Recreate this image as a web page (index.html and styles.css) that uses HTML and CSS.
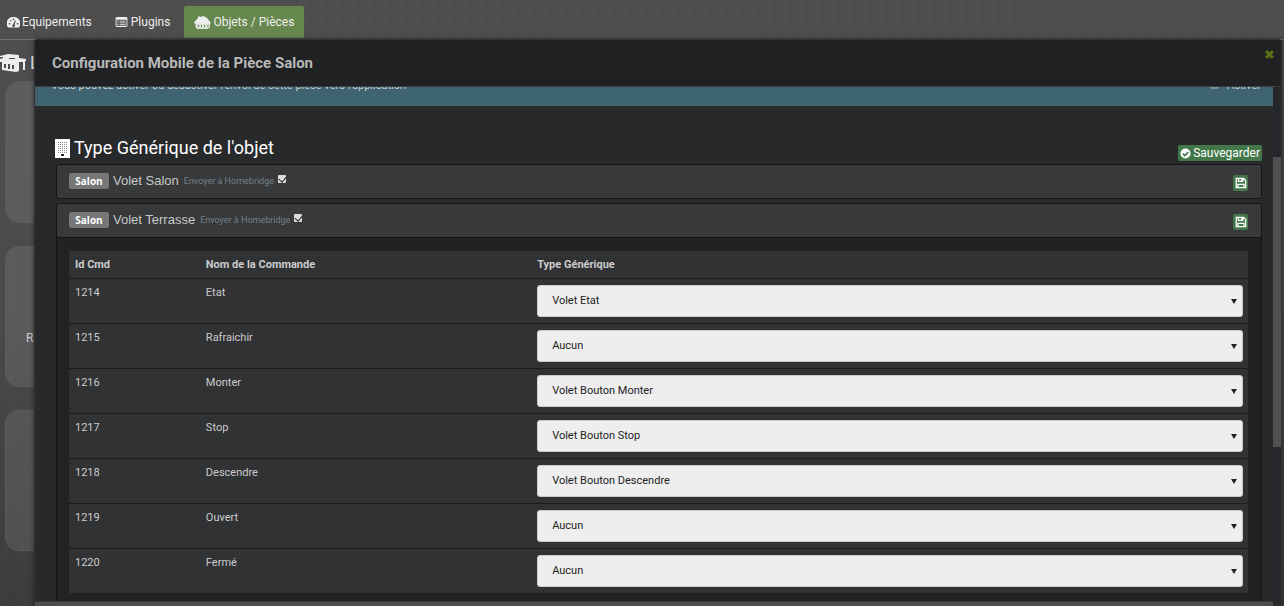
FILE: index.html
```html
<!DOCTYPE html>
<html lang="fr">
<head>
<meta charset="utf-8">
<title>Objets / Pièces</title>
<link rel="stylesheet" href="styles.css">
</head>
<body>
<svg width="0" height="0" class="sprite" aria-hidden="true">
  <symbol id="floppy" viewBox="0 0 14 14"><path fill="none" stroke="currentColor" stroke-width="1.5" d="M1.5 1.5h8.5l2.5 2.5v8.500H1.500zM4 1.500v3.500h5V1.500M3.500 12.500V8.500h7v4"/><path fill="currentColor" d="M7 2h1.500v2.500H7z"/></symbol>
</svg>
<nav class="nav">
  <a class="nav-link" href="#"><svg class="icon-gauge" viewBox="0 0 14 12"><path fill="currentColor" fill-rule="evenodd" d="M7 0a7 7 0 0 0-5.900 11.500h11.800A7 7 0 0 0 7 0zM1.800 6.500h1.600v1.600H1.800zM3.300 3.200h1.500v1.500H3.300zM6.200 1.600h1.600v1.600H6.200zM10.600 6.500h1.600v1.600h-1.600zM8.600 3.600l1 .4-1.500 4.200a1.500 1.500 0 1 1-1.300-.3z"/></svg>Equipements</a>
  <a class="nav-link" href="#"><svg class="icon-list" viewBox="0 0 13 11"><path fill="currentColor" fill-rule="evenodd" d="M1 0h11l1 1v9l-1 1H1l-1-1V1zM1 3v7h11V3zM2 4h1.500v1H2zM4.500 4H11v1H4.500zM2 6h1.500v1H2zM4.500 6H11v1H4.500zM2 8h1.500v1H2zM4.500 8H11v1H4.500z"/></svg>Plugins</a>
  <a class="nav-link active" href="#"><svg class="icon-home" viewBox="0 0 17 13"><path fill="currentColor" d="M0 6.500L4 2V.5h2V1L9.500 0 13 2l4 5-1 .8H1z"/><path fill="currentColor" fill-rule="evenodd" d="M1.500 7H16v4.500L13 13H3l-1.500-1.500zM4 9v2h1V9zM7 9v2h1V9zM10 9v2h1V9zM13.500 9v2h.8V9z" opacity=".85"/></svg>Objets / Pièces</a>
</nav>
<main class="page">
  <h1 class="page-title"><svg class="icon-house" viewBox="0 0 27 20"><path fill="currentColor" fill-rule="evenodd" d="M0 3L8 1l11 1v3l7 1v2h-1v9h-2V9h-4v9l-3 1-14-2V9H0V6l3-1V4H0zM4 11v4h2v-4zM8 11v5h2v-5zM12 12v4h2v-4zM9 5v1h6V5z"/></svg>L</h1>
  <div class="tile"></div>
  <div class="tile"><span>R</span></div>
  <div class="tile"></div>
</main>
<section class="dialog" role="dialog" aria-labelledby="dialog-title">
  <header class="dialog-head">
    <h2 id="dialog-title">Configuration Mobile de la Pièce Salon</h2>
    <button class="close" aria-label="Fermer"><svg viewBox="0 0 8 8"><path stroke="currentColor" stroke-width="2.600" d="M1 1l6 6M7 1L1 7"/></svg></button>
  </header>
  <div class="dialog-main">
    <div class="dialog-body">
      <div class="alert"><span>Vous pouvez activer ou désactiver l'envoi de cette pièce vers l'application</span><label class="enable"><input type="checkbox">Activer</label></div>
      <div class="content">
        <div class="section-head">
          <h3><svg class="icon-building" viewBox="0 0 15 19"><path fill="#fff" d="M0 0h15v19H0z"/><path stroke="#888" stroke-width="1" stroke-dasharray="1 1" d="M3 3.500h9M3 5.500h9M3 7.500h9M3 9.500h9M3 11.500h9M3 13.500h9"/><path fill="#222" d="M6 15h3v2H6z"/></svg>Type Générique de l'objet</h3>
          <button class="save"><svg viewBox="0 0 12 12"><circle cx="6" cy="6" r="5.500" fill="#fff"/><path fill="none" stroke="#43774a" stroke-width="1.800" d="M3 6l2.200 2.200L9 4.500"/></svg>Sauvegarder</button>
        </div>
        <article class="panel">
          <header class="panel-head"><span class="badge">Salon</span><a class="name" href="#">Volet Salon</a><label class="send">Envoyer à Homebridge<input class="check" type="checkbox" checked></label><button class="disk" aria-label="Sauvegarder Volet Salon"><svg><use href="#floppy"/></svg></button></header>
        </article>
        <article class="panel">
          <header class="panel-head"><span class="badge">Salon</span><a class="name" href="#">Volet Terrasse</a><label class="send">Envoyer à Homebridge<input class="check" type="checkbox" checked></label><button class="disk" aria-label="Sauvegarder Volet Terrasse"><svg><use href="#floppy"/></svg></button></header>
          <div class="panel-body">
            <table>
              <colgroup><col class="col-id"><col class="col-name"><col></colgroup>
              <thead><tr><th>Id Cmd</th><th>Nom de la Commande</th><th>Type Générique</th></tr></thead>
              <tbody>
                <tr><td>1214</td><td>Etat</td><td><div class="pick"><select aria-label="Etat"><option>Volet Etat</option></select></div></td></tr>
                <tr><td>1215</td><td>Rafraichir</td><td><div class="pick"><select aria-label="Rafraichir"><option>Aucun</option></select></div></td></tr>
                <tr><td>1216</td><td>Monter</td><td><div class="pick"><select aria-label="Monter"><option>Volet Bouton Monter</option></select></div></td></tr>
                <tr><td>1217</td><td>Stop</td><td><div class="pick"><select aria-label="Stop"><option>Volet Bouton Stop</option></select></div></td></tr>
                <tr><td>1218</td><td>Descendre</td><td><div class="pick"><select aria-label="Descendre"><option>Volet Bouton Descendre</option></select></div></td></tr>
                <tr><td>1219</td><td>Ouvert</td><td><div class="pick"><select aria-label="Ouvert"><option>Aucun</option></select></div></td></tr>
                <tr><td>1220</td><td>Fermé</td><td><div class="pick"><select aria-label="Fermé"><option>Aucun</option></select></div></td></tr>
              </tbody>
            </table>
          </div>
        </article>
      </div>
    </div>
    <div class="track"><div class="thumb"></div></div>
  </div>
  <div class="track-x"></div>
</section>
</body>
</html>
```
FILE: styles.css
```css
* { box-sizing: border-box; }
body {
  margin: 0;
  height: 100vh;
  overflow: hidden;
  font: 11px/16px Roboto, "Liberation Sans", sans-serif;
  color: #ccc;
  background:
    repeating-linear-gradient(91deg, rgba(255,255,255,.01) 0 2px, transparent 2px 7px, rgba(0,0,0,.015) 7px 9px, transparent 9px 16px),
    linear-gradient(#4e4e4e, #4b4b4b 50%, #3c3c3c);
}
h1, h2, h3 { margin: 0; }
a { color: inherit; text-decoration: none; }
button { border: 0; padding: 0; font: inherit; cursor: pointer; }
.sprite { position: absolute; }

.nav { display: flex; height: 40px; padding-top: 6px; border-bottom: 1px solid #707070; }
.nav-link {
  display: flex; align-items: center; gap: 2px;
  height: 32px; padding: 0 11px; margin-right: 1px;
  font-size: 12px; color: #eee;
}
.nav-link:first-child { padding-left: 7px; }
.nav-link.active { background: #66884f; border-radius: 2px 2px 0 0; padding: 0 10px; margin-left: 2px; }
.icon-gauge { width: 13px; height: 11px; }
.icon-list { width: 13px; height: 10px; margin-right: 1px; }
.icon-home { width: 17px; height: 13px; }

.page-title { display: flex; align-items: center; gap: 3px; height: 41px; margin-top: 2px; font-size: 18px; font-weight: 400; color: #eee; }
.page-title + .tile { margin-top: -2px; }
.icon-house { width: 27px; height: 20px; }
.tile {
  width: 140px; height: 142px; margin: 0 0 23px 5px; padding: 83px 20px 0;
  border: 1px solid #5c5c5c; border-radius: 14px;
  background: rgba(255,255,255,.09);
  font-size: 12px;
}
.tile + .tile { height: 141px; }

.dialog {
  position: absolute; inset: 39px 2px 0 34px;
  display: flex; flex-direction: column;
  background: #28292b;
  border: 1px solid #333; border-bottom: 0; border-radius: 4px 4px 0 0;
  box-shadow: 0 0 4px rgba(0,0,0,.5);
}
.dialog-head {
  flex: none; display: flex; justify-content: space-between;
  height: 47px; padding: 0 7px 0 17px;
  background: #202123; border-bottom: 1px solid #3c3e3f;
}
.dialog-head h2 { font-size: 15px; line-height: 46px; font-weight: 700; color: #b8b8b8; }
.close { width: 9px; height: 9px; margin-top: 10px; background: none; color: #5c7012; }
.close svg { display: block; width: 9px; height: 9px; }
.dialog-main { flex: 1; min-height: 0; display: flex; }
.dialog-body { flex: 1; min-width: 0; overflow: hidden; }
.track { width: 8px; padding-top: 70px; background: #25272a; }
.thumb { height: 290px; background: #4f5052; }
.track-x { flex: none; height: 5px; margin-right: 8px; background: #4c4d4f; border-top: 1px solid #38393b; }

.alert {
  display: flex; justify-content: space-between;
  height: 38px; margin-top: -19px; padding: 10px 12px 0 13px;
  background: #3e6472; border-left: 3px solid #41606a; border-bottom: 1px solid #4a6269;
  color: #c8d0d2;
}
.enable { display: flex; align-items: flex-start; gap: 8px; }
.enable input { appearance: none; width: 9px; height: 11px; margin: 0; background: #7c8e95; border-radius: 2px; }
.content { padding: 31px 11px 0 21px; }
.section-head { display: flex; justify-content: space-between; height: 27px; }
.section-head h3 { display: flex; align-items: center; gap: 4px; margin-left: -1px; height: 22px; font-size: 18px; line-height: 22px; font-weight: 400; color: #fff; }
.icon-building { width: 15px; height: 19px; }
.save {
  display: flex; align-items: center; gap: 2px; height: 16px; margin-top: 8px; padding: 0 2px;
  border-radius: 2px; background: #43774a; color: #fff; font-size: 12px;
}
.save svg { width: 11px; height: 11px; }

.panel { border: 1px solid #131415; border-radius: 3px; background: #212224; margin-bottom: 4px; }
.panel-head { display: flex; height: 33px; padding: 0 13px 0 12px; background: #37393a; border-radius: 2px; }
.badge {
  width: 40px; height: 16px; margin-top: 8px; border-radius: 2px;
  background: #777; color: #fff; font: 700 10px/16px "Open Sans", sans-serif; text-align: center;
}
.name { margin-left: 4px; font: 13px/31px "Liberation Sans", sans-serif; color: #c8c8c8; }
.send { display: flex; margin-left: 5px; font-size: 9px; line-height: 33px; color: #75818a; }
.check { appearance: none; width: 8px; height: 8px; margin: 10px 0 0 4px; background: #ddd; border-radius: 1px; }
.check::before { content: ""; display: block; width: 4px; height: 6px; margin: 0 0 0 2px; border: solid #222; border-width: 0 1px 1px 0; transform: rotate(40deg); }
.disk { width: 15px; height: 16px; margin: 10px 0 0 auto; border-radius: 2px; background: #43774a; color: #fff; }
.disk svg { display: block; width: 12px; height: 12px; margin: 0 auto; }
.panel-body { padding: 13px; padding-left: 12px; border-top: 1px solid #131415; }
table { width: 100%; border-collapse: separate; border-spacing: 0; table-layout: fixed; background: #303234; }
.col-id { width: 11.1%; }
.col-name { width: 28.1%; }
th { height: 27px; padding: 0 6px; text-align: left; font-weight: 700; }
td { height: 45px; padding: 6px 5px 5px 6px; border-top: 1px solid #1c1d1f; vertical-align: top; }
.pick { position: relative; }
.pick::after {
  content: ""; position: absolute; right: 6px; top: 14px;
  border: solid transparent; border-width: 5px 3px 0; border-top-color: #222;
}
select {
  display: block; appearance: none; width: 100%; height: 32px; padding: 0 14px;
  border: 1px solid #ccc; border-radius: 3px; background: #eee; color: #222;
  font: inherit;
}
```
